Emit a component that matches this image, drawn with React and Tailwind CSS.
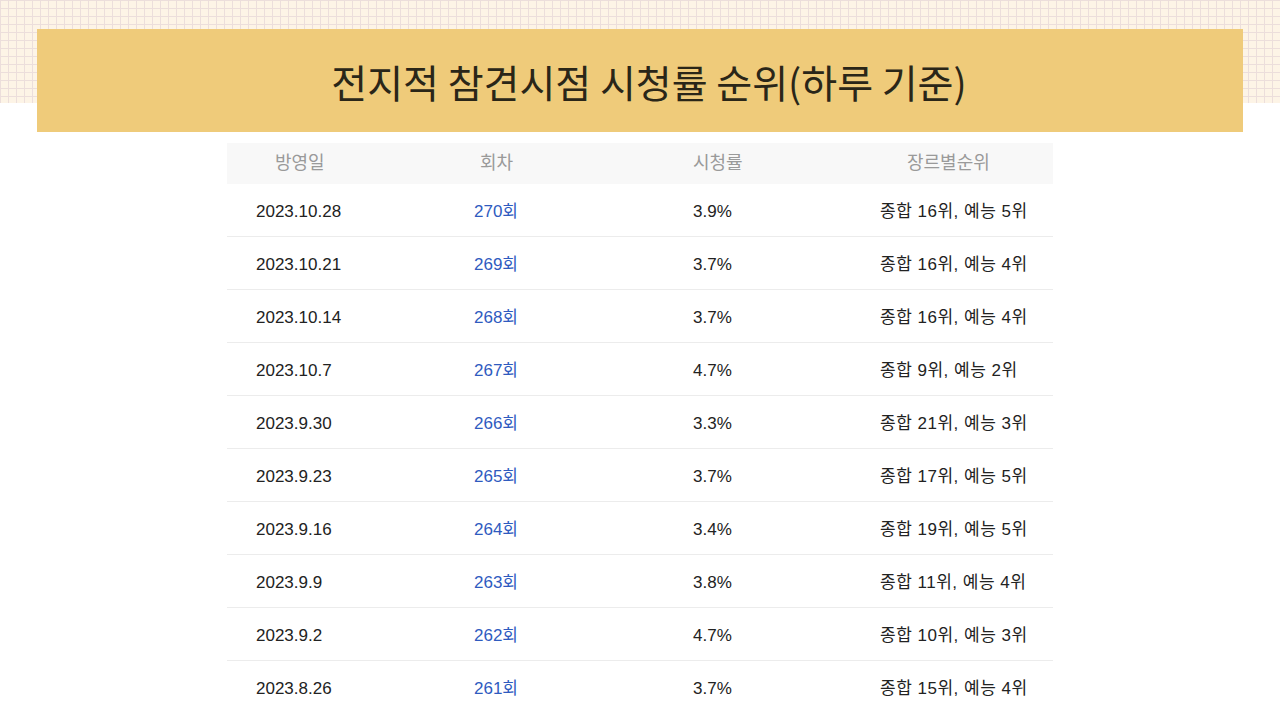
const rows = [
  ['2023.10.28', '270회', '3.9%', '종합 16위, 예능 5위'],
  ['2023.10.21', '269회', '3.7%', '종합 16위, 예능 4위'],
  ['2023.10.14', '268회', '3.7%', '종합 16위, 예능 4위'],
  ['2023.10.7', '267회', '4.7%', '종합 9위, 예능 2위'],
  ['2023.9.30', '266회', '3.3%', '종합 21위, 예능 3위'],
  ['2023.9.23', '265회', '3.7%', '종합 17위, 예능 5위'],
  ['2023.9.16', '264회', '3.4%', '종합 19위, 예능 5위'],
  ['2023.9.9', '263회', '3.8%', '종합 11위, 예능 4위'],
  ['2023.9.2', '262회', '4.7%', '종합 10위, 예능 3위'],
  ['2023.8.26', '261회', '3.7%', '종합 15위, 예능 4위'],
]

const font = "font-['Liberation_Sans','Noto_Sans_CJK_KR',sans-serif]"

export default function App() {
  return (
    <div className="w-[1280px] h-[720px] overflow-hidden bg-[#fdf4e6] bg-[linear-gradient(to_bottom,transparent_103px,#ffffff_103px),linear-gradient(to_right,#ecdedb_1px,transparent_1px),linear-gradient(to_bottom,#ecdedb_1px,transparent_1px)] bg-[size:100%_100%,8px_8px,8px_8px] pt-[29px]">
      <div className="mx-[37px] h-[103px] bg-[#efcb7a] flex items-center justify-center pl-[18px] pt-[2px]">
        <h1 className="font-['Noto_Sans_CJK_KR',sans-serif] text-[39px] text-[#2a2618]">
          전지적 참견시점 시청률 순위(하루 기준)
        </h1>
      </div>

      <div className={`w-[826px] mx-auto mt-[11px] ${font}`}>
        <div className="grid grid-cols-[193px_200px_200px_233px] h-[41px] items-center bg-[#f8f8f8] text-[18px] text-[#9a9a9a]">
          <div className="pl-[48px]">방영일</div>
          <div className="pl-[60px]">회차</div>
          <div className="pl-[73px]">시청률</div>
          <div className="pl-[87px]">장르별순위</div>
        </div>
        {rows.map((r, i) => (
          <div
            key={r[1]}
            className={`grid grid-cols-[193px_200px_200px_233px] h-[53px] items-center pt-[3px] text-[17px] text-[#222] ${i < rows.length - 1 ? 'border-b border-[#ececec]' : ''}`}
          >
            <div className="pl-[29px]">{r[0]}</div>
            <div className="pl-[54px] text-[#2f5bbf]">{r[1]}</div>
            <div className="pl-[73px]">{r[2]}</div>
            <div className="pl-[60px] tracking-[0.5px]">{r[3]}</div>
          </div>
        ))}
      </div>
    </div>
  )
}
